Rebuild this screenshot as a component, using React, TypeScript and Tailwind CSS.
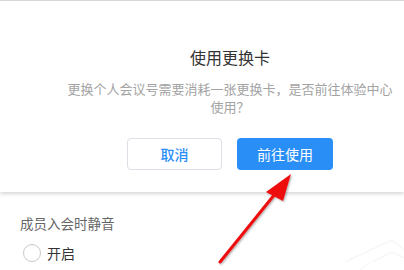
import React from "react";

export default function App() {
  return (
    <div
      className="relative w-[404px] h-[270px] overflow-hidden bg-white"
      style={{ fontFamily: '"Noto Sans CJK SC", "Noto Sans", sans-serif' }}
    >
      <div className="relative z-10 h-[192px] border-t border-[#d6d6d6] bg-white shadow-[0_2px_4px_rgba(0,0,0,0.16)] flex flex-col items-center pl-[56px] pt-[46px]">
        <div className="text-[16px] leading-[20px] text-[#333]">使用更换卡</div>
        <div className="mt-[13px] w-[332px] text-center text-[13px] leading-[18px] text-[#a3a3a3]">
          更换个人会议号需要消耗一张更换卡，是否前往体验中心使用？
        </div>
        <div className="mt-[22px] flex gap-[15px]">
          <button className="w-[95px] h-[32px] rounded-[4px] border border-[#dcdfe6] bg-white text-[14px] text-[#2a8ef7] font-medium">
            取消
          </button>
          <button className="w-[96px] h-[32px] rounded-[4px] bg-[#2a8ef7] text-[14px] text-white">
            前往使用
          </button>
        </div>
      </div>
      <div className="px-[20px] pt-[21px]">
        <div className="text-[13.5px] leading-[20px] text-[#666]">成员入会时静音</div>
        <div className="mt-[10px] flex items-center h-[20px] pl-[3px]">
          <span className="w-[18px] h-[18px] rounded-full border border-[#c8c8c8] bg-white"></span>
          <span className="ml-[6px] text-[14px] leading-[20px] text-[#333]">开启</span>
        </div>
      </div>
      <svg className="absolute left-0 top-0 z-20" width="404" height="270" viewBox="0 0 404 270">
        <defs>
          <filter id="sh" x="-20%" y="-20%" width="140%" height="140%">
            <feDropShadow dx="1" dy="1" stdDeviation="1.2" floodColor="#000" floodOpacity="0.35" />
          </filter>
        </defs>
        <g filter="url(#sh)">
          <line x1="220" y1="262" x2="279" y2="189" stroke="#ee1111" strokeWidth="3" strokeLinecap="round" />
          <polygon points="291,174 266,192 283,201" fill="#ee1111" />
        </g>
        <g stroke="#f7f7f7" strokeWidth="1.5" fill="none">
          <path d="M345 262 L392 240 L404 250" />
          <path d="M372 262 L392 252 L404 258" />
          <path d="M360 270 L370 262" />
        </g>
      </svg>
    </div>
  );
}
